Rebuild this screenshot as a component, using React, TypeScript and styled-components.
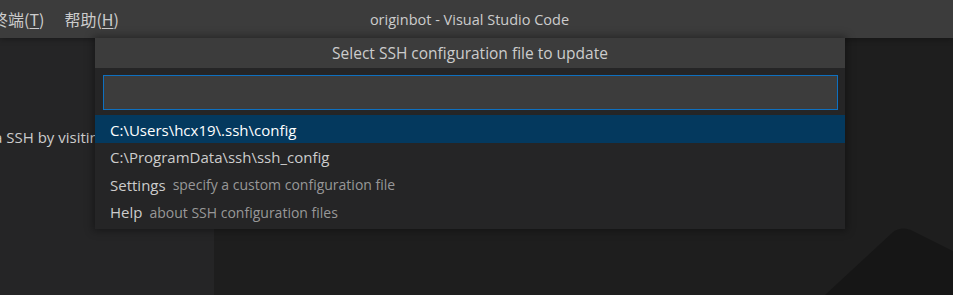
import React from "react";
import styled, { createGlobalStyle } from "styled-components";

const Global = createGlobalStyle`
  html, body { margin: 0; padding: 0; background: #1e1e1e; }
  body { font-family: "Open Sans", "Noto Sans CJK SC", sans-serif; }
`;

const Window = styled.div`
  position: relative;
  width: 953px;
  height: 295px;
  overflow: hidden;
  display: flex;
  flex-direction: column;
  background: #1e1e1e;
`;

const TitleBar = styled.div`
  height: 38px;
  flex: 0 0 38px;
  background: #3c3c3c;
  display: grid;
  grid-template-columns: 1fr auto 1fr;
  align-items: center;
  color: #cccccc;
  box-shadow: 0 1px 6px rgba(0, 0, 0, 0.35);
  position: relative;
  z-index: 1;
`;

const Menu = styled.div`
  display: flex;
  gap: 20px;
  margin-left: -8px;
  font-family: "Noto Sans CJK SC", sans-serif;
  font-size: 16px;
`;

const MenuItem = styled.span`
  white-space: nowrap;
  u { text-decoration: underline; text-underline-offset: 2px; }
`;

const Title = styled.div`
  font-size: 14.5px;
  color: #cccccc;
  margin-right: 14px;
  white-space: nowrap;
`;

const Main = styled.div`
  flex: 1;
  display: flex;
`;

const Sidebar = styled.div`
  width: 214px;
  flex: 0 0 214px;
  background: #252526;
  color: #cccccc;
  font-size: 15px;
  padding-top: 89px;
  white-space: nowrap;
  overflow: hidden;
`;

const SideText = styled.div`
  margin-left: -6px;
`;

const Editor = styled.div`
  flex: 1;
  position: relative;
  background: #1e1e1e;
  overflow: hidden;
`;

const Watermark = styled.svg`
  position: absolute;
  left: 611px;
  top: 188px;
`;

const QuickPick = styled.div`
  position: absolute;
  left: 95px;
  top: 38px;
  width: 750px;
  background: #252526;
  box-shadow: 0 0 8px 2px rgba(0, 0, 0, 0.36);
  z-index: 2;
  padding-bottom: 4px;
`;

const Header = styled.div`
  height: 30px;
  background: #3c3c3c;
  color: #cccccc;
  font-size: 15.5px;
  display: flex;
  align-items: center;
  justify-content: center;
`;

const InputWrap = styled.div`
  padding: 7px 7px 5px 8px;
`;

const Input = styled.div`
  height: 33px;
  background: #3c3c3c;
  border: 1px solid #0e70c0;
`;

const List = styled.div`
  display: flex;
  flex-direction: column;
`;

const Row = styled.div<{ $selected?: boolean }>`
  height: 27.5px;
  box-sizing: border-box;
  padding-top: 2px;
  display: flex;
  align-items: center;
  gap: 7px;
  padding-left: 15px;
  background: ${(p) => (p.$selected ? "#04395e" : "transparent")};
  color: ${(p) => (p.$selected ? "#ffffff" : "#cccccc")};
  font-size: 15px;
  white-space: nowrap;
`;

const Desc = styled.span`
  color: rgba(204, 204, 204, 0.7);
  font-size: 14px;
`;

const items = [
  { label: "C:\\Users\\hcx19\\.ssh\\config", selected: true },
  { label: "C:\\ProgramData\\ssh\\ssh_config" },
  { label: "Settings", desc: "specify a custom configuration file" },
  { label: "Help", desc: "about SSH configuration files" },
];

export default function App() {
  return (
    <>
      <Global />
      <Window>
        <TitleBar>
          <Menu>
            <MenuItem>
              终端(<u>T</u>)
            </MenuItem>
            <MenuItem>
              帮助(<u>H</u>)
            </MenuItem>
          </Menu>
          <Title>originbot - Visual Studio Code</Title>
          <div />
        </TitleBar>
        <Main>
          <Sidebar>
            <SideText>a SSH by visiting</SideText>
          </Sidebar>
          <Editor>
            <Watermark width="128" height="69" viewBox="0 0 128 69">
              <path
                d="M0 69 L68 6 Q76 0 86 4 L128 25 L128 69 Z"
                fill="#161616"
              />
            </Watermark>
          </Editor>
        </Main>
        <QuickPick>
          <Header>Select SSH configuration file to update</Header>
          <InputWrap>
            <Input />
          </InputWrap>
          <List>
            {items.map((it) => (
              <Row key={it.label} $selected={it.selected}>
                <span>{it.label}</span>
                {it.desc && <Desc>{it.desc}</Desc>}
              </Row>
            ))}
          </List>
        </QuickPick>
      </Window>
    </>
  );
}
